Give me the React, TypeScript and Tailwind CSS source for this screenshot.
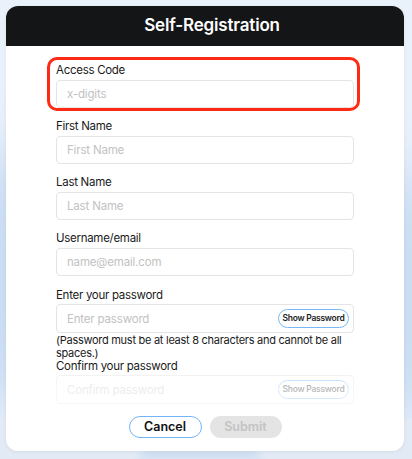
import React from "react";

type FieldProps = {
  label: string;
  placeholder: string;
  type?: string;
  className?: string;
};

const font = { fontFamily: "Inter, 'Noto Sans', sans-serif" };

function Field({ label, placeholder, type = "text", className }: FieldProps) {
  return (
    <div className={className}>
      <label className="block text-[11.5px] leading-[18px] tracking-[-0.025em] text-[#1a1a1a]">{label}</label>
      <input
        type={type}
        placeholder={placeholder}
        className="mt-[1px] block h-[28px] w-full rounded-[4px] border border-[#e4e4e4] bg-white px-[10px] text-[11.5px] tracking-[-0.015em] text-[#222] outline-none placeholder:text-[#c2c2c2]"
      />
    </div>
  );
}

function PasswordField({ placeholder }: { placeholder: string }) {
  return (
    <div className="relative flex h-[29px] w-full items-center rounded-[4px] border border-[#e4e4e4] bg-white">
      <input
        type="password"
        placeholder={placeholder}
        className="h-full min-w-0 flex-1 bg-transparent px-[10px] text-[11.5px] tracking-[-0.015em] outline-none placeholder:text-[#c2c2c2]"
      />
      <button className="mr-[4px] h-[19px] w-[71px] shrink-0 whitespace-nowrap rounded-full border border-[#78b8f6] bg-white px-0 text-[8.5px] font-semibold tracking-[-0.03em] text-[#222]">
        Show Password
      </button>
    </div>
  );
}

export default function App() {
  return (
    <div className="relative h-[459px] w-[412px] overflow-hidden bg-[#e9f1fb]" style={font}>
      {/* blurred backdrop */}
      <div className="absolute -left-[60px] top-[150px] h-[260px] w-[160px] rounded-full bg-[#cadcf2] blur-[30px]" />
      <div className="absolute -right-[50px] top-[170px] h-[250px] w-[130px] rounded-full bg-[#cadcf2] blur-[30px]" />
      <div className="absolute bottom-0 left-0 h-[40px] w-full bg-[#e1eaf5]" />
      <div className="absolute bottom-0 left-[140px] h-[10px] w-[120px] rounded-t-full bg-[#cfdff2] blur-[3px]" />

      <div className="relative ml-[6px] mt-[6px] flex h-[445px] w-[398px] flex-col overflow-hidden rounded-[12px] bg-white shadow-[0_1px_4px_rgba(0,0,0,0.06)]">
        <div className="flex h-[40px] shrink-0 items-center justify-center bg-[#141517] pl-[14px]">
          <h1 className="text-[17px] font-semibold tracking-[-0.01em] text-white">Self-Registration</h1>
        </div>

        <div className="relative flex-1 px-[50px] pt-[15px]">
          <Field label="Access Code" placeholder="x-digits" />
          <Field className="mt-[9px]" label="First Name" placeholder="First Name" />
          <Field className="mt-[9px]" label="Last Name" placeholder="Last Name" />
          <Field className="mt-[9px]" label="Username/email" placeholder="name@email.com" />

          <div className="mt-[10px]">
            <label className="block text-[11.5px] leading-[18px] tracking-[-0.025em] text-[#1a1a1a]">Enter your password</label>
            <PasswordField placeholder="Enter password" />
            <p className="mt-[1px] text-[11px] leading-[13px] tracking-[-0.025em] text-[#1a1a1a]">
              (Password must be at least 8 characters and cannot be all spaces.)
            </p>
            <label className="block text-[11.5px] leading-[13px] tracking-[-0.025em] text-[#1a1a1a]">Confirm your password</label>
            <div className="relative mt-[2px]">
              <PasswordField placeholder="Confirm password" />
              <div className="pointer-events-none absolute -inset-x-[2px] -top-[2px] bottom-0 bg-linear-to-b from-white/50 via-white/70 to-white/70" />
            </div>
          </div>

          <div className="mt-[12px] flex justify-center gap-[8px]">
            <button className="h-[22px] w-[73px] rounded-full border-[1.5px] border-[#72b4f7] bg-white text-[12.5px] font-semibold text-[#111]">
              Cancel
            </button>
            <button className="h-[22px] w-[72px] rounded-full bg-[#e4e4e4] text-[12.5px] font-semibold text-[#c3c3c3]">
              Submit
            </button>
          </div>

          {/* highlight annotation */}
          <div className="pointer-events-none absolute left-[41px] top-[11px] h-[54px] w-[313px] rounded-[10px] border-[3px] border-[#ff2a14]" />
        </div>
      </div>
    </div>
  );
}
